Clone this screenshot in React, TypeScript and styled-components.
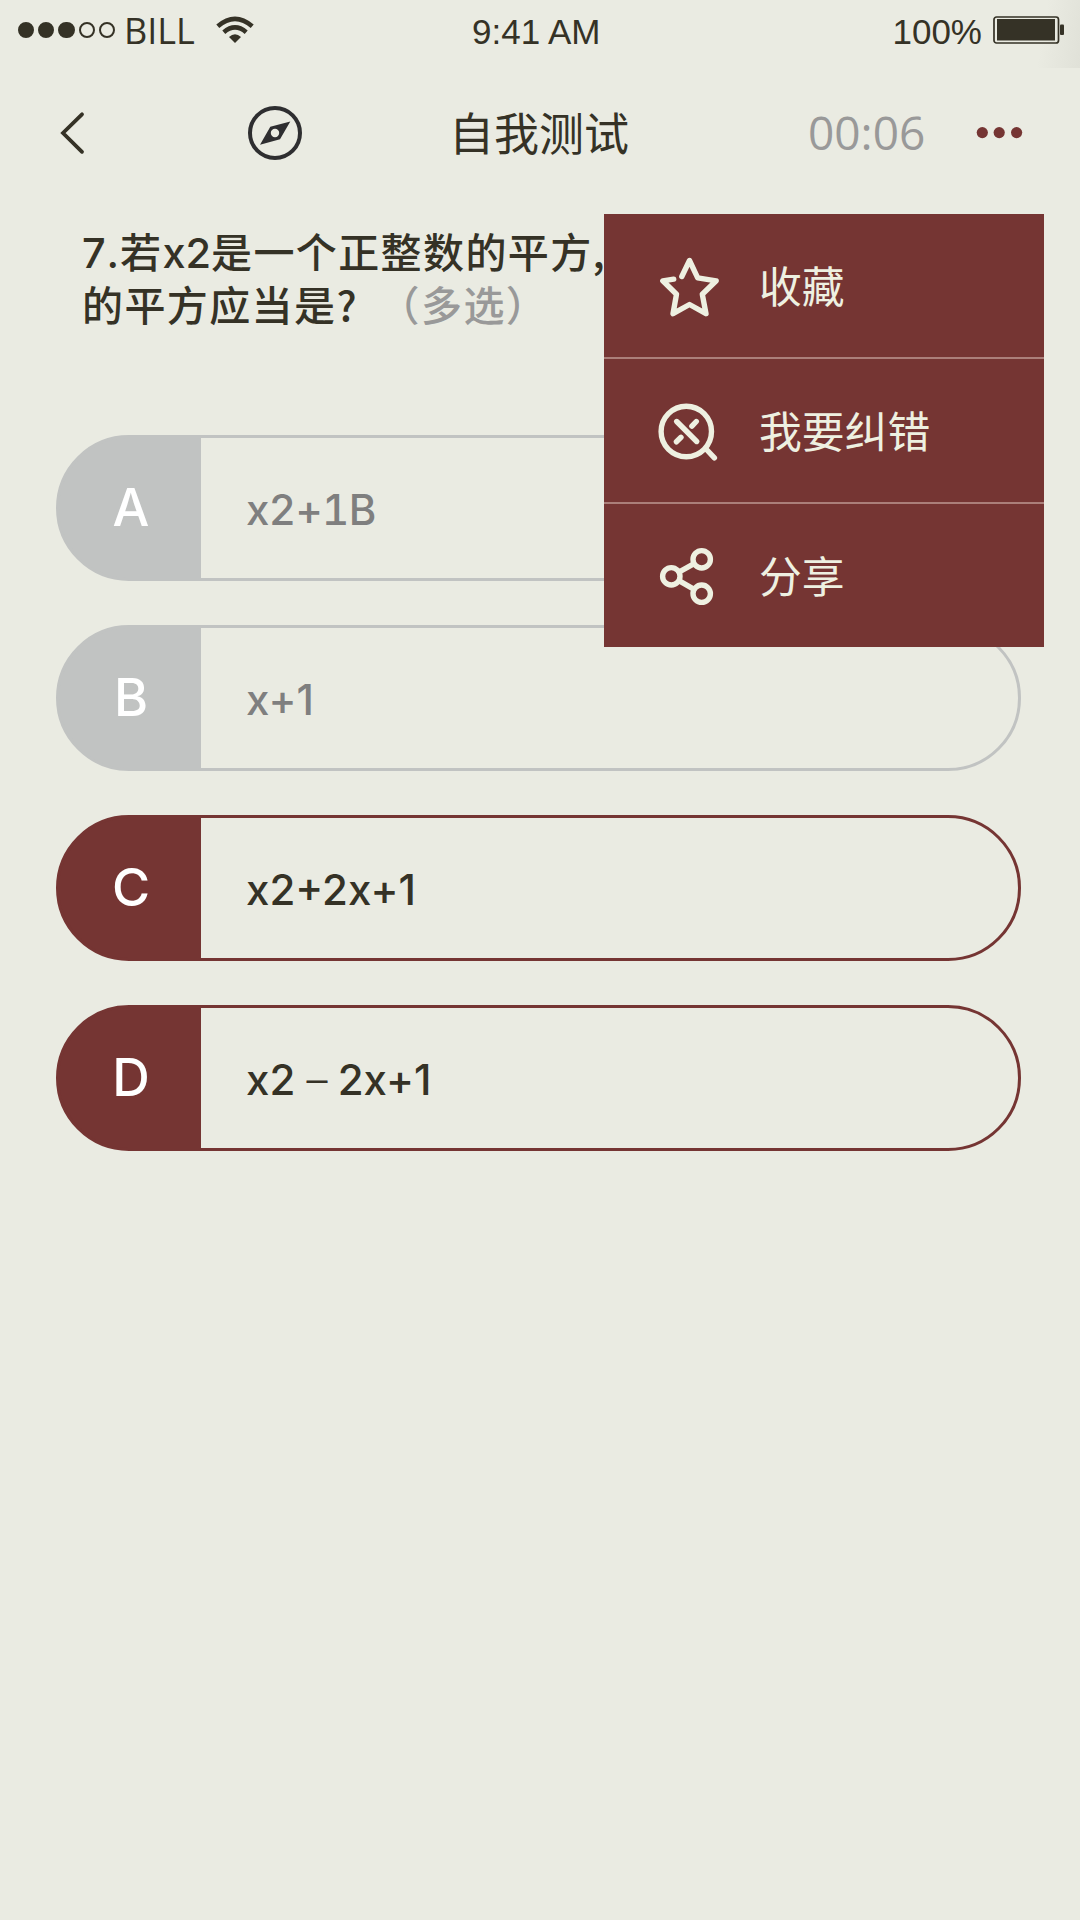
import React from "react";
import styled, { createGlobalStyle } from "styled-components";

const INK = "#353226";
const PAPER = "#eaebe2";
const WINE = "#753533";
const MUTED = "#c1c3c2";
const CREAM = "#eef0e1";

const GlobalStyle = createGlobalStyle`
  *, *::before, *::after { box-sizing: border-box; }
  body { margin: 0; background: ${PAPER}; }
`;

const Screen = styled.div`
  width: 1080px;
  height: 1920px;
  overflow: hidden;
  display: flex;
  flex-direction: column;
  background: ${PAPER};
  color: ${INK};
  font-family: "Noto Sans CJK SC", sans-serif;
`;

const StatusBar = styled.div`
  height: 68px;
  padding: 0 16px 0 18px;
  display: grid;
  grid-template-columns: 454px auto 1fr;
  background: linear-gradient(100deg, transparent 96%, #e0e1d8 100%);
`;

const StatusGroup = styled.div<{ $end?: boolean }>`
  display: flex;
  align-items: flex-start;
  justify-content: ${(p) => (p.$end ? "flex-end" : "flex-start")};
`;

const Signal = styled.div`
  display: flex;
  gap: 4px;
  padding-top: 22px;
`;

const SignalDot = styled.i<{ $on: boolean }>`
  width: 16.2px;
  height: 16.2px;
  border-radius: 50%;
  border: 2px solid ${INK};
  background: ${(p) => (p.$on ? INK : "transparent")};
`;

const Carrier = styled.span`
  margin: 10px 0 0 9px;
  width: 92px;
  font: 400 36px/42px "Open Sans", sans-serif;
`;

const StatusText = styled.span`
  padding-top: 11px;
  font: 400 35px/42px "Liberation Sans", sans-serif;
  white-space: pre;
`;

const WifiIcon = styled.svg`
  margin-top: 15.5px;
`;

const BatteryIcon = styled.svg`
  margin: 15px 0 0 10px;
`;

const NavBar = styled.header`
  position: relative;
  height: 130px;
  display: grid;
  grid-template-columns: 60px 187px 1fr 152px 74px;
  align-items: center;
  padding: 0 46px 0 44px;
`;

const NavButton = styled.button`
  display: flex;
  padding: 0;
  border: 0;
  background: none;
`;

const Title = styled.h1`
  margin: 0;
  padding: 0 0 3px 158px;
  font-size: 45px;
  line-height: 60px;
  font-weight: 400;
  white-space: nowrap;
`;

const Timer = styled.span`
  padding-bottom: 2px;
  font: 450 46px/60px "Open Sans", sans-serif;
  color: #999;
`;

const Menu = styled.ul`
  position: absolute;
  z-index: 2;
  top: 146px;
  right: 36px;
  width: 440px;
  margin: 0;
  padding: 0;
  list-style: none;
  background: ${WINE};
`;

const MenuItem = styled.li`
  height: 143px;
  padding-left: 50px;
  display: flex;
  align-items: center;
  color: ${CREAM};

  & + & {
    height: 145px;
    border-top: 2px solid #ab7f7a;
  }
`;

const MenuLabel = styled.span`
  padding-bottom: 4px;
  font-size: 42.8px;
  line-height: 60px;
  font-weight: 400;
`;

const MenuIcon = styled.svg`
  flex: none;
  width: 70px;
  height: 70px;
  margin-right: 35px;
  fill: none;
  stroke: ${CREAM};
  stroke-width: 5.4;
  stroke-linecap: round;
  stroke-linejoin: round;
`;

const Question = styled.p`
  height: 237px;
  margin: 0;
  padding: 26px 0 0 82px;
  font-size: 41px;
  line-height: 53px;
  font-weight: 500;
  letter-spacing: 1.4px;
  white-space: nowrap;
`;

const Latin = styled.span<{ $spacing: string }>`
  font-family: Inter, sans-serif;
  font-size: 41.5px;
  font-kerning: none;
  line-height: 1;
  letter-spacing: ${(p) => p.$spacing};
`;

const Hint = styled.span`
  margin-left: 10px;
  color: #999;
`;

const Options = styled.div`
  display: flex;
  flex-direction: column;
  gap: 44px;
  padding: 0 59px 0 56px;
`;

const Option = styled.div<{ $selected: boolean }>`
  height: 146px;
  display: flex;
  align-items: center;
  overflow: hidden;
  border: 3px solid ${(p) => (p.$selected ? WINE : MUTED)};
  border-radius: 73px;
  background: linear-gradient(${(p) => (p.$selected ? WINE : MUTED)} 0 0) left / 145px 100% no-repeat border-box;
  color: ${(p) => (p.$selected ? INK : "#7f7f7f")};
  font-family: Inter, sans-serif;
  font-weight: 500;
`;

const Letter = styled.span`
  width: 142px;
  padding-left: 2px;
  text-align: center;
  color: #fff;
  font-size: 52px;
  font-weight: 550;
  line-height: 60px;
`;

const Answer = styled.span<{ $tabular?: boolean }>`
  padding: 4px 0 0 45px;
  font-size: 42px;
  font-variant-numeric: ${(p) => (p.$tabular ? "tabular-nums" : "normal")};
  line-height: 50px;
  letter-spacing: ${(p) => (p.$tabular ? "-0.6px" : "0")};
`;

const Dash = styled.span`
  font-weight: 300;
  letter-spacing: -1px;
`;

const options = [
  { letter: "A", text: "x2+1B", selected: false, tabular: true },
  { letter: "B", text: "x+1", selected: false },
  { letter: "C", text: "x2+2x+1", selected: true },
  { letter: "D", text: <>x2 <Dash>–</Dash> 2x+1</>, selected: true },
];

export default function App() {
  return (
    <>
      <GlobalStyle />
      <Screen>
        <StatusBar>
          <StatusGroup>
            <Signal>
              {[true, true, true, false, false].map((on, i) => (
                <SignalDot key={i} $on={on} />
              ))}
            </Signal>
            <Carrier>BILL</Carrier>
            <WifiIcon width="38" height="28" viewBox="0 0 38 28" fill="none" stroke={INK} strokeWidth="4.6">
              <path d="M1.8 10.2Q19 -4.6 36.2 10.2" />
              <path d="M7.8 16.2Q19 6.6 30.2 16.2" />
              <path d="M13 21Q19 15.5 25 21L19 27Z" fill={INK} stroke="none" />
            </WifiIcon>
          </StatusGroup>
          <StatusText>9:41 AM</StatusText>
          <StatusGroup $end>
            <StatusText>100%</StatusText>
            <BatteryIcon width="72" height="30" viewBox="0 0 72 30">
              <rect x="2" y="2" width="64.5" height="26" rx="2.5" fill="none" stroke={INK} strokeWidth="1.7" />
              <rect x="5" y="4" width="58" height="21.5" fill={INK} />
              <rect x="68" y="9.5" width="4" height="10.5" rx="1" fill={INK} />
            </BatteryIcon>
          </StatusGroup>
        </StatusBar>

        <NavBar>
          <NavButton aria-label="返回">
            <svg width="60" height="60" viewBox="44 103 60 60" fill="none" stroke={INK} strokeWidth="3.8" strokeLinecap="round">
              <path d="M82 114.3L63 133L82 151.8" />
            </svg>
          </NavButton>
          <NavButton aria-label="导航">
            <svg width="187" height="60" viewBox="104 103 187 60" overflow="visible">
              <circle cx="275" cy="133" r="25" fill="none" stroke="#2e2e30" strokeWidth="4" />
              <path
                fillRule="evenodd"
                fill="#2e2e30"
                d="M290.3 121.5L280 139.3L260 144.7L270.3 126.7ZM275 128.8A4.2 4.2 0 1 0 275 137.2A4.2 4.2 0 1 0 275 128.8Z"
              />
            </svg>
          </NavButton>
          <Title>自我测试</Title>
          <Timer>00:06</Timer>
          <NavButton aria-label="更多">
            <svg width="74" height="60" viewBox="960 103 74 60" fill={WINE}>
              <circle cx="982.3" cy="132.6" r="5.6" />
              <circle cx="999.2" cy="132.6" r="5.6" />
              <circle cx="1016.6" cy="132.6" r="5.6" />
            </svg>
          </NavButton>
          <Menu>
            <MenuItem>
              <MenuIcon viewBox="654 250.5 70 70">
                <path d="M681.8 276L689.5 260L697.7 277.3L716.2 280.3L702.3 293.7L706 313.2L689.5 304L673 313.2L676.5 293.7L662.8 280.3L673.7 278.7" />
              </MenuIcon>
              <MenuLabel>收藏</MenuLabel>
            </MenuItem>
            <MenuItem>
              <MenuIcon viewBox="654 395.5 70 70">
                <circle cx="686.3" cy="431" r="25.2" />
                <path d="M676.7 421L696.7 441M696.3 421L691.9 425.6M681 436.8L676.4 441.3M706.5 449L714.4 457.4" />
              </MenuIcon>
              <MenuLabel>我要纠错</MenuLabel>
            </MenuItem>
            <MenuItem>
              <MenuIcon viewBox="654 541 70 70">
                <circle cx="671.3" cy="576.3" r="8.7" />
                <circle cx="701.7" cy="559.3" r="8.7" />
                <circle cx="701.7" cy="593.7" r="8.7" />
                <path d="M679.3 571.8L693.7 563.8M679.3 580.8L693.7 589.2" />
              </MenuIcon>
              <MenuLabel>分享</MenuLabel>
            </MenuItem>
          </Menu>
        </NavBar>

        <Question>
          <Latin $spacing="0.9px">7.</Latin>若<Latin $spacing="-0.1px">x2</Latin>是一个正整数的平方,
          <br />
          的平方应当是? <Hint>（多选）</Hint>
        </Question>

        <Options>
          {options.map((o) => (
            <Option key={o.letter} $selected={o.selected}>
              <Letter>{o.letter}</Letter>
              <Answer $tabular={o.tabular}>{o.text}</Answer>
            </Option>
          ))}
        </Options>
      </Screen>
    </>
  );
}
